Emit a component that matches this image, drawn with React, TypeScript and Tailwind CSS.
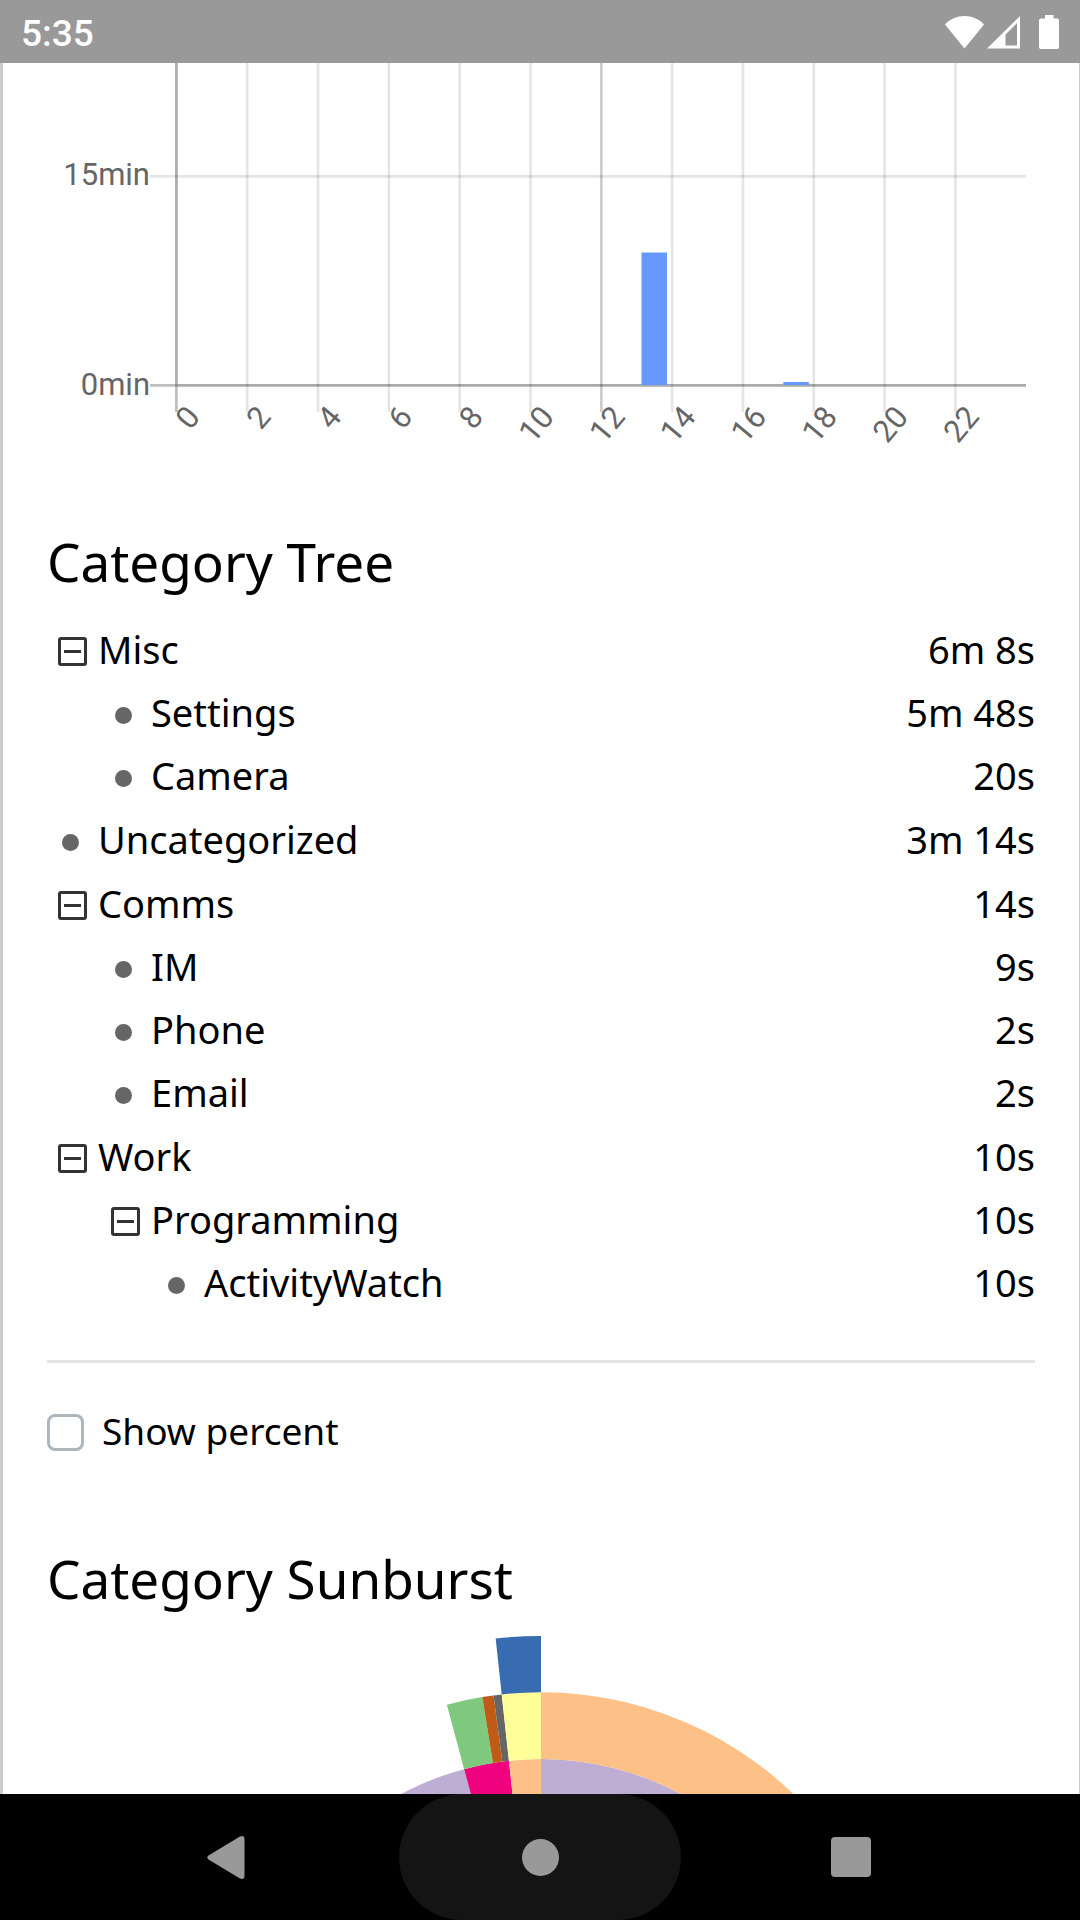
import { useState } from "react";

type Category = {
  name: string;
  time: string;
  children?: Category[];
};

type Slice = {
  from: number;
  to: number;
  ring: number;
  color: string;
};

const categories: Category[] = [
  {
    name: "Misc",
    time: "6m 8s",
    children: [
      { name: "Settings", time: "5m 48s" },
      { name: "Camera", time: "20s" },
    ],
  },
  { name: "Uncategorized", time: "3m 14s" },
  {
    name: "Comms",
    time: "14s",
    children: [
      { name: "IM", time: "9s" },
      { name: "Phone", time: "2s" },
      { name: "Email", time: "2s" },
    ],
  },
  {
    name: "Work",
    time: "10s",
    children: [
      {
        name: "Programming",
        time: "10s",
        children: [{ name: "ActivityWatch", time: "10s" }],
      },
    ],
  },
];

// Angles are degrees clockwise from the top, rings count outwards.
const slices: Slice[] = [
  { from: 0, to: 226, ring: 1, color: "#beaed4" },
  { from: 226, to: 345, ring: 1, color: "#beaed4" },
  { from: 345, to: 353.8, ring: 1, color: "#f0027f" },
  { from: 353.8, to: 360, ring: 1, color: "#fdc086" },
  { from: 0, to: 213, ring: 2, color: "#fdc086" },
  { from: 345, to: 350.7, ring: 2, color: "#7fc97f" },
  { from: 350.7, to: 352.5, ring: 2, color: "#bf5b17" },
  { from: 352.5, to: 353.8, ring: 2, color: "#666666" },
  { from: 353.8, to: 360, ring: 2, color: "#ffff99" },
  { from: 353.8, to: 360, ring: 3, color: "#386cb0" },
];

const hours = [0, 2, 4, 6, 8, 10, 12, 14, 16, 18, 20, 22];

function StatusBar() {
  return (
    <header className="flex h-[63px] shrink-0 items-center justify-between bg-[#999999] px-[21px] text-white">
      <span className="pt-1 font-['Roboto',sans-serif] text-[37px] leading-none font-medium">5:35</span>
      <div className="flex items-center">
        <svg className="mr-[3px] h-[34px] w-[39px]" viewBox="0 0 39 34" fill="currentColor" aria-label="Wi-Fi">
          <path d="M0 9.5C5 4 12 1 19.5 1S34 4 39 9.5L19.5 33.5z" />
        </svg>
        <svg className="mr-[19px] h-[34px] w-[33px]" viewBox="0 0 33 34" aria-label="Mobile signal">
          <path d="M0 33.5L33 1v32.5z M18.5 19.500v11h11.500V8z" fill="currentColor" fillRule="evenodd" />
        </svg>
        <svg className="h-[34px] w-5" viewBox="0 0 20 34" fill="currentColor" aria-label="Battery">
          <path d="M6 0h8.5v3.500H18a2 2 0 0 1 2 2V32a2 2 0 0 1-2 2H2a2 2 0 0 1-2-2V5.500a2 2 0 0 1 2-2h4z" />
        </svg>
      </div>
    </header>
  );
}

function HourChart() {
  const hourX = (hour: number) => 129.4 + hour * 35.41;

  return (
    <svg
      className="block w-full overflow-visible font-['Roboto',sans-serif] text-[31px]"
      viewBox="0 0 988 400"
      role="img"
      aria-label="Time spent per hour"
    >
      <g stroke="#000" strokeWidth="2.7">
        {hours.map((hour) => (
          <line
            key={hour}
            x1={hourX(hour)}
            x2={hourX(hour)}
            y1="0"
            y2="349"
            strokeOpacity={hour === 0 ? 0.25 : hour === 12 ? 0.2 : 0.1}
          />
        ))}
        <line x1="103" x2="979" y1="113.4" y2="113.4" strokeOpacity="0.1" />
        <line x1="103" x2="979" y1="322.4" y2="322.4" strokeOpacity="0.25" />
        <line x1={hourX(0)} x2={hourX(0)} y1="0" y2="321" strokeOpacity="0.1" />
        <line x1="131" x2="979" y1="322.4" y2="322.4" strokeOpacity="0.1" />
      </g>
      <g fill="#6699ff">
        <rect x="594.5" y="189.5" width="25.5" height="132.5" />
        <rect x="736.3" y="319" width="25.5" height="3" />
      </g>
      <g fill="#666666" textAnchor="end">
        <text x="103" y="122">15min</text>
        <text x="103" y="332">0min</text>
        {hours.map((hour) => (
          <text
            key={hour}
            dominantBaseline="central"
            transform={`translate(${hourX(hour) + 17} 348) rotate(-50)`}
          >
            {hour}
          </text>
        ))}
      </g>
    </svg>
  );
}

function CategoryRow({ category, depth }: { category: Category; depth: number }) {
  const [open, setOpen] = useState(true);

  return (
    <li>
      <div className="flex h-[63px] items-center gap-[11px] pl-[11px]" style={{ marginLeft: depth * 53 }}>
        {category.children ? (
          <button
            type="button"
            className="w-[29px] pt-1"
            aria-expanded={open}
            aria-label={`Toggle ${category.name}`}
            onClick={() => setOpen(!open)}
          >
            <svg className="block size-[29px]" viewBox="0 0 29 29" fill="none" stroke="#333333" strokeWidth="3">
              <rect x="1.5" y="1.5" width="26" height="26" rx="1.5" />
              <path d={open ? "M6 14.5h17" : "M6 14.5h17M14.5 6v17"} />
            </svg>
          </button>
        ) : (
          <span className="w-[29px] pt-1.5 pl-1">
            <span className="block size-[17px] rounded-full bg-[#666666]" />
          </span>
        )}
        <span className="flex-1">{category.name}</span>
        <span>{category.time}</span>
      </div>
      {category.children && open && (
        <ul>
          {category.children.map((child) => (
            <CategoryRow key={child.name} category={child} depth={depth + 1} />
          ))}
        </ul>
      )}
    </li>
  );
}

function slicePath({ from, to, ring }: Slice) {
  const radius = 420;
  const outer = radius * Math.sqrt((ring + 1) / 4);
  const inner = radius * Math.sqrt(ring / 4);
  const large = to - from > 180 ? 1 : 0;
  const point = (r: number, deg: number) => {
    const a = (deg * Math.PI) / 180;
    return `${radius + r * Math.sin(a)} ${radius - r * Math.cos(a)}`;
  };

  return `M${point(outer, from)}A${outer} ${outer} 0 ${large} 1 ${point(outer, to)}L${point(inner, to)}A${inner} ${inner} 0 ${large} 0 ${point(inner, from)}Z`;
}

function Sunburst() {
  return (
    <svg className="mx-auto mt-[27px] block w-full max-w-[840px]" viewBox="0 0 840 840" role="img" aria-label="Category sunburst">
      {slices.map((slice) => (
        <path key={`${slice.ring}-${slice.from}`} d={slicePath(slice)} fill={slice.color} />
      ))}
    </svg>
  );
}

function NavigationBar() {
  return (
    <nav className="flex h-[126px] shrink-0 justify-center gap-[29px] bg-black text-[#999999]">
      <button type="button" aria-label="Back" className="flex w-[282px] items-center justify-center pr-1.5">
        <svg className="h-[43px] w-[38px]" viewBox="0 0 38 43" fill="currentColor">
          <path d="M1.5 19.5L32.5 .7Q37.5-1.5 37.5 3.5v36q0 5-5 2.8L1.5 23.5q-2.5-2 0-4z" />
        </svg>
      </button>
      <button type="button" aria-label="Home" className="flex w-[282px] items-center justify-center rounded-full bg-[#141414]">
        <span className="size-[37px] rounded-full bg-[#999999]" />
      </button>
      <button type="button" aria-label="Overview" className="flex w-[282px] items-center justify-center">
        <span className="size-10 rounded bg-[#999999]" />
      </button>
    </nav>
  );
}

export default function App() {
  return (
    <div className="flex h-screen flex-col bg-white font-['Noto_Sans',sans-serif] text-black">
      <StatusBar />
      <main className="min-h-0 flex-1 overflow-y-auto border-r border-l-[3px] border-[#cccccc] px-11 [scrollbar-width:none]">
        <HourChart />

        <h2 className="mt-[69px] text-[53px] leading-[60px]">Category Tree</h2>
        <ul className="mt-[26px] flex flex-col gap-px text-[38px]">
          {categories.map((category) => (
            <CategoryRow key={category.name} category={category} depth={0} />
          ))}
        </ul>

        <hr className="mt-[46px] border-t-[3px] border-[#e5e5e5]" />

        <label className="mt-[51px] flex items-center gap-[18px] text-[37px] leading-[33px]">
          <input
            type="checkbox"
            className="size-[37px] appearance-none rounded-lg border-[3px] border-[#adb5bd] checked:bg-[#007bff]"
          />
          <span className="pb-1">Show percent</span>
        </label>

        <h2 className="mt-[98px] text-[53px] leading-[60px]">Category Sunburst</h2>
        <Sunburst />
      </main>
      <NavigationBar />
    </div>
  );
}
